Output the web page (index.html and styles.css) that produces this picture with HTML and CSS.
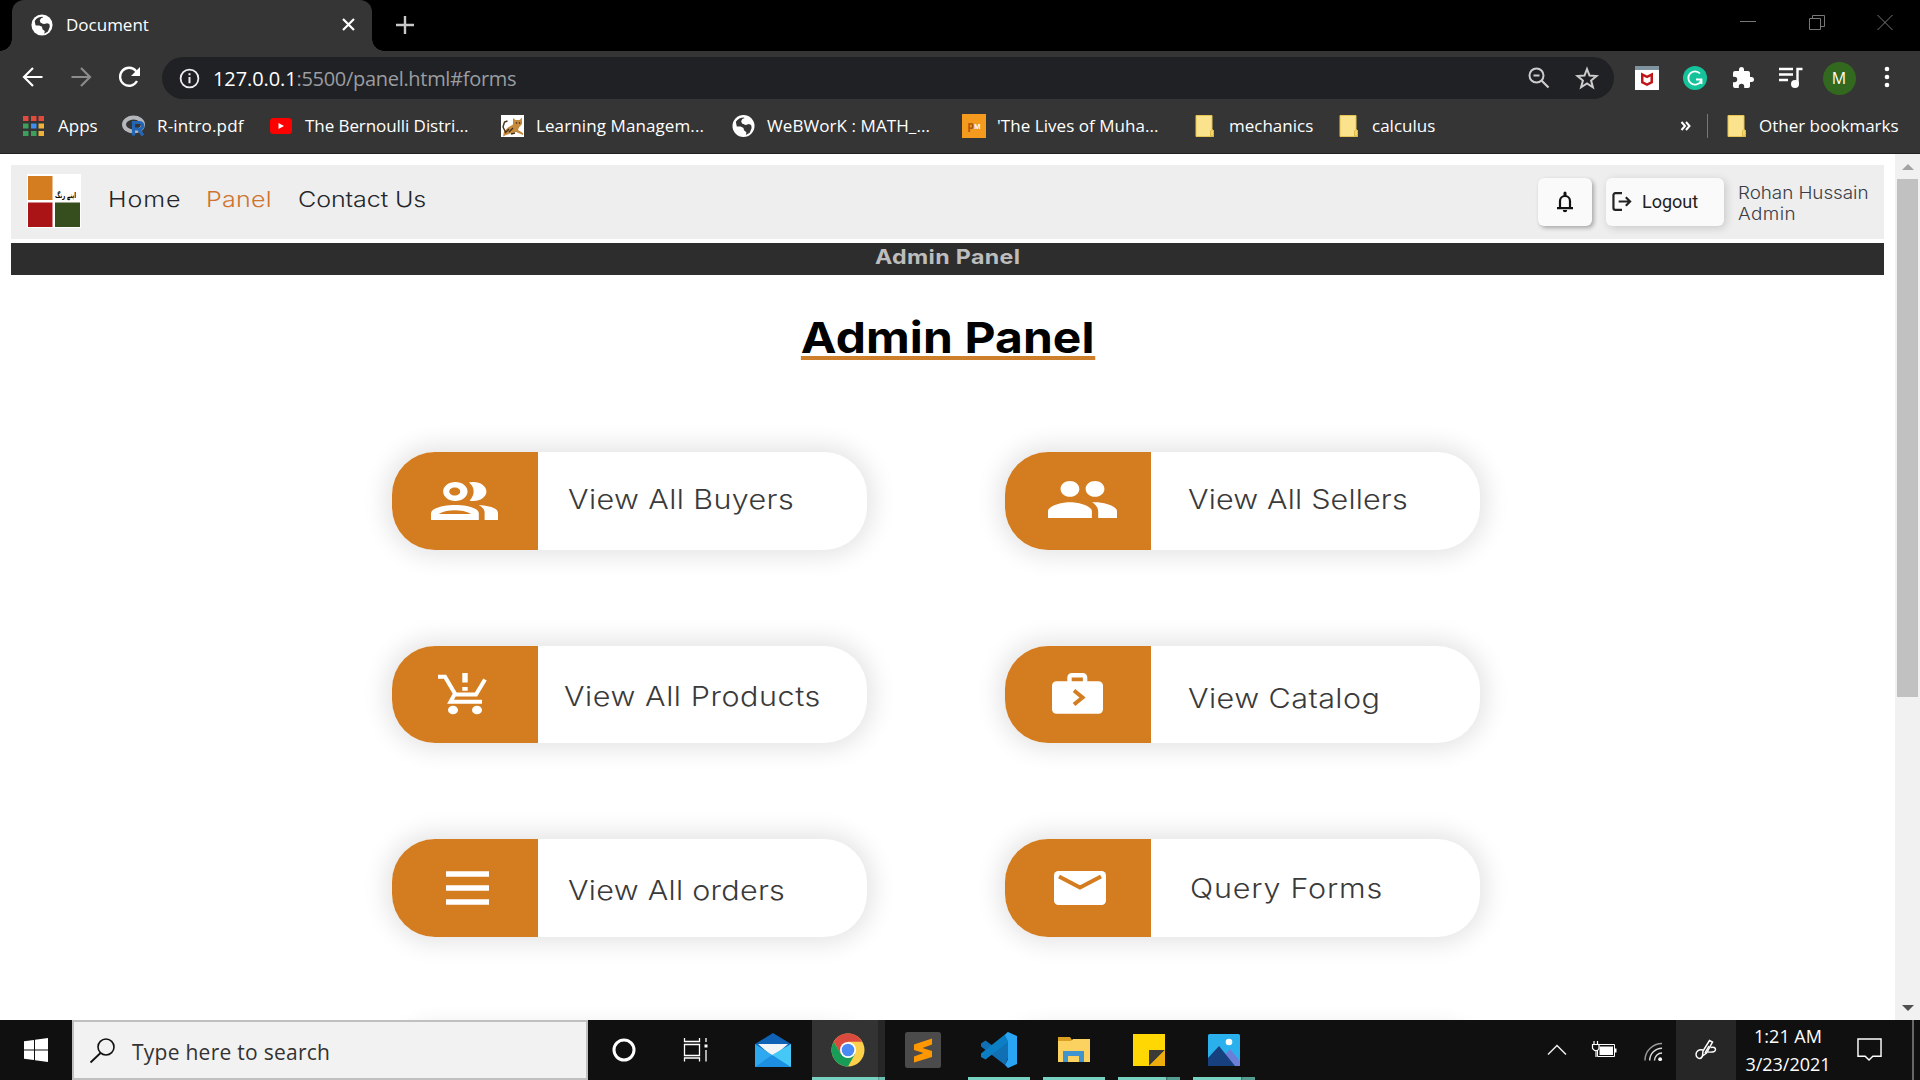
FILE: index.html
```html
<!DOCTYPE html>
<html lang="en">
<head>
<meta charset="utf-8">
<title>Document</title>
<link rel="stylesheet" href="styles.css">
</head>
<body>
<svg class="defs" aria-hidden="true">
  <symbol id="globe" viewBox="0 0 24 24">
    <circle cx="12" cy="12" r="11.5" fill="#fff"/>
    <path d="M4 7.5C6 4.500 9 3 12.500 3l1 2-3 2 .5 2.500 3.500 1.500 3-1 2.500 1 .5 3-2 5-4 2.500.5-3-2.500-2-.5-2.500-3-1.500L5 12.500z" fill="#353535"/>
    <path d="M11 4.500l5-1.500 4 4-3.500 1.500-3 2-3-1-1-2.500zM4.500 12.500l4 1.500 2 3 2.500 2-.5 2-4-1.500-3-3.500z" fill="#fff"/>
  </symbol>
  <symbol id="folder" viewBox="0 0 19 22">
    <path d="M1 .5h16v14l1.500 1v6H1z" fill="#fbe28c" stroke="#e5c452"/>
    <path d="M15.500 21v-5l1.500-1.500 1.500 1.500v5z" fill="#f7d566" stroke="#d8b13a" stroke-width=".8"/>
  </symbol>
</svg>

<header class="tabstrip">
  <div class="tab">
    <svg class="favicon"><use href="#globe"/></svg>
    <span class="tab-title">Document</span>
    <svg class="tab-close" viewBox="0 0 13 13"><path d="M1 1l11 11M12 1L1 12" stroke="#fff" stroke-width="2.200"/></svg>
  </div>
  <svg class="new-tab" viewBox="0 0 18 18"><path d="M9 0v18M0 9h18" stroke="#c8c8c8" stroke-width="2.400"/></svg>
  <div class="window-controls">
    <svg viewBox="0 0 16 16"><path d="M0 7.500h16" stroke="#777"/></svg>
    <svg viewBox="0 0 16 16"><path d="M.5 4.500h11v11H.5zM3.500 4V1.500h12v11H12" fill="none" stroke="#777"/></svg>
    <svg viewBox="0 0 16 16"><path d="M.5 1l15 15M15.500 1l-15 15" stroke="#777"/></svg>
  </div>
</header>

<nav class="toolbar">
  <div class="nav-buttons">
    <svg viewBox="0 0 24 24"><path d="M21.500 12H3.500M12 3l-9 9 9 9" fill="none" stroke="#fff" stroke-width="2.200"/></svg>
    <svg viewBox="0 0 24 24"><path d="M2.500 12h18M12 3l9 9-9 9" fill="none" stroke="#8b8b8b" stroke-width="2.200"/></svg>
    <svg viewBox="0 0 24 24"><path d="M20 16A9 9 0 1 1 19 6l2 2" fill="none" stroke="#fff" stroke-width="2.300"/><path d="M23 2v9h-9z" fill="#fff"/></svg>
  </div>
  <div class="omnibox">
    <svg class="info" viewBox="0 0 22 22"><circle cx="11" cy="11" r="9.300" fill="none" stroke="#eee" stroke-width="1.900"/><path d="M11 9.500v6.500M11 5.500v2.200" stroke="#eee" stroke-width="2.100"/></svg>
    <span class="url"><b>127.0.0.1</b>:5500/panel.html#forms</span>
    <svg class="action" viewBox="0 0 24 24"><circle cx="9.500" cy="9.500" r="7" fill="none" stroke="#ccc" stroke-width="2"/><path d="M6.500 9.500h6M14.500 14.500l7 7" stroke="#ccc" stroke-width="2.200"/></svg>
    <svg class="action" viewBox="0 0 24 24"><path d="M12 3l2.500 6.500 7 .5-5.400 4.500 1.800 6.800-5.900-3.800-5.900 3.800 1.800-6.800L2.500 10l7-.5z" fill="none" stroke="#ccc" stroke-width="2"/></svg>
  </div>
  <div class="extensions">
    <svg viewBox="0 0 24 24"><path d="M0 0h24v24H0z" fill="#fff"/><path d="M0 0h24v4H0z" fill="#7f949e"/><path d="M6 6.500l6 3 6-3v10.500l-6 3-6-3zM8.500 10.500v5l3.500 1.700 3.500-1.700v-5L12 12.300z" fill="#c01818" fill-rule="evenodd"/></svg>
    <svg viewBox="0 0 24 24"><circle cx="12" cy="12" r="12" fill="#15c39a"/><path d="M17 7.500A6.700 6.700 0 1 0 18 15M13 13.500h5.500V18" fill="none" stroke="#fff" stroke-width="1.800"/></svg>
    <svg viewBox="0 0 24 24"><path d="M20.500 11H19V7a2 2 0 0 0-2-2h-4V3.500a2.500 2.500 0 0 0-5 0V5H4a2 2 0 0 0-2 2v3.800h1.500a2.700 2.700 0 0 1 0 5.400H2V20a2 2 0 0 0 2 2h3.800v-1.500a2.700 2.700 0 0 1 5.400 0V22H17a2 2 0 0 0 2-2v-4h1.500a2.500 2.500 0 0 0 0-5z" fill="#fff"/></svg>
    <svg viewBox="0 0 24 24"><path d="M0 3h14M0 8.500h14M0 14h9" stroke="#fff" stroke-width="2.400"/><path d="M18.500 18V3h5" fill="none" stroke="#fff" stroke-width="2.400"/><circle cx="16" cy="18" r="4" fill="#fff"/></svg>
    <span class="avatar">M</span>
    <svg viewBox="0 0 24 24"><circle cx="12" cy="3" r="2.300" fill="#fff"/><circle cx="12" cy="11" r="2.300" fill="#fff"/><circle cx="12" cy="19" r="2.300" fill="#fff"/></svg>
  </div>
</nav>

<nav class="bookmarks">
  <a class="bm bm-apps"><svg viewBox="0 0 24 24"><path d="M0 2h5.500v5H0zM8 2h5.500v5H8zM15.500 2H21v5h-5.500z" fill="#e04b3e"/><path d="M0 9.500h5.500v5H0zM0 17h5.500v5H0zM8 17h5.500v5H8z" fill="#3e9f5d"/><path d="M8 9.500h5.500v5H8z" fill="#3d8ef0"/><path d="M15.500 9.500H21v5h-5.500zM15.500 17H21v5h-5.500z" fill="#efb13a"/></svg><span>Apps</span></a>
  <a class="bm bm-r"><svg viewBox="0 0 24 24"><ellipse cx="11.500" cy="10.500" rx="9.500" ry="7" fill="none" stroke="#b4b7bc" stroke-width="4"/><path d="M11.500 21.500V8.500h6a3.200 3.200 0 0 1 0 6.500h-6M16.500 15l4.500 6.500" fill="none" stroke="#2366b5" stroke-width="3.200"/></svg><span>R-intro.pdf</span></a>
  <a class="bm bm-yt"><svg viewBox="0 0 24 24"><rect y="4" width="22" height="16" rx="3.500" fill="#f00"/><path d="M8.500 9v6l5.500-3z" fill="#fff"/></svg><span>The Bernoulli Distri...</span></a>
  <a class="bm bm-lms"><svg viewBox="0 0 24 24"><path d="M0 1h23v22H0z" fill="#fff"/><path d="M12 4l2.500 2h4L21 3.500V10l-3 3.500-1 2.500 5 3v2l-7-3-4 1-6 2-3 1.500 1-5 4-4 5-3z" fill="#c58a3c"/><path d="M4.500 18L2 13l1.500-5 3-1M8 15l-4 4M12 14l-4 4M15 8.500l1 1m3-1l-1 1M10 20l4-1" fill="none" stroke="#443019" stroke-width="1.400"/></svg><span>Learning Managem...</span></a>
  <a class="bm bm-web"><svg><use href="#globe" width="23" height="24"/></svg><span>WeBWorK : MATH_...</span></a>
  <a class="bm bm-pm"><svg viewBox="0 0 24 24"><path d="M0 0h24v24H0z" fill="#f39a1f"/><text x="5.500" y="15" font-size="10" font-weight="700" font-family="Open Sans, sans-serif" fill="#a55405">p<tspan fill="#fff" font-size="7">M</tspan></text></svg><span>'The Lives of Muha...</span></a>
  <a class="bm bm-mech"><svg><use href="#folder" width="19" height="22" x="1" y="1"/></svg><span>mechanics</span></a>
  <a class="bm bm-calc"><svg><use href="#folder" width="19" height="22" x="1" y="1"/></svg><span>calculus</span></a>
  <svg class="overflow" viewBox="0 0 11 10"><path d="M1.500 1L5 5 1.500 9M6 1l3.500 4L6 9" fill="none" stroke="#fff" stroke-width="2"/></svg>
  <a class="bm bm-other"><svg><use href="#folder" width="19" height="22" y="1"/></svg><span>Other bookmarks</span></a>
</nav>

<main class="viewport">
  <div class="page">
    <div class="site-header">
      <svg class="logo" viewBox="0 0 54 54"><path d="M0 0h54v54H0z" fill="#fff"/><path d="M1 2h24.500v24H1z" fill="#d47d20"/><path d="M1 28.500h24.500V53H1z" fill="#ab1417"/><path d="M28 28.500h25V53H28z" fill="#364e1d"/><text x="38.500" y="24" text-anchor="middle" font-size="8" font-weight="700" font-family="DejaVu Sans, sans-serif" textLength="21" lengthAdjust="spacingAndGlyphs">اپنے رنگ</text></svg>
      <a class="link home">Home</a>
      <a class="link current">Panel</a>
      <a class="link contact">Contact Us</a>
      <button class="btn bell"><svg viewBox="0 0 16 20"><path d="M3 16V9a5 5 0 0 1 10 0v7" fill="none" stroke="#111" stroke-width="2.200"/><path d="M0 15h16v2.200H0zM6.500 1a1.500 1.500 0 0 1 3 0v3h-3zM5.800 18h4.400a2.200 2.200 0 0 1-4.400 0z" fill="#111"/></svg></button>
      <button class="btn logout"><svg viewBox="0 0 21 20"><path d="M10.500 1.200H3.500a2 2 0 0 0-2 2v13.600a2 2 0 0 0 2 2h7M7 10h12M14.500 5.500L19 10l-4.500 4.500" fill="none" stroke="#222" stroke-width="2.300"/></svg><span>Logout</span></button>
      <div class="user"><span class="name">Rohan Hussain</span><span class="role">Admin</span></div>
    </div>
    <div class="title-bar"><span>Admin Panel</span></div>
    <h1 class="heading"><span>Admin Panel</span></h1>
    <div class="cards">
      <a class="card buyers"><span class="tile"><svg width="67" height="38" viewBox="1 4 22 16" preserveAspectRatio="none" fill="#fff" fill-rule="evenodd"><path d="M16.670 13.800C18.040 14.660 18.600 15.620 18.600 17v3H23v-3c0-2.180-3.570-3.200-6.330-3.200zM15 12c2.210 0 4.200-1.790 4.200-4s-1.990-4-4.200-4c-.67 0-1.310.1-1.530.24C14.500 5.270 15 6.580 15 8s-.5 2.730-1.330 3.760c.42.14.86.24 1.330.24zM9 12c2.210 0 4-1.790 4-4s-1.790-4-4-4-4 1.790-4 4 1.790 4 4 4zm-.2-5.700c1.100 0 1.800.8 1.800 1.700s-.7 1.700-1.800 1.700-1.800-.8-1.800-1.700.7-1.700 1.800-1.700zM9 13.700c-2.670 0-8 .9-8 3.500V20h15.700v-2.800c0-2.600-5.030-3.500-7.700-3.500zM3.500 17.500C5 16.300 7 15.900 8.800 15.900s3.900.4 5.400 1.600z"/></svg></span><span class="label">View All Buyers</span></a>
      <a class="card sellers"><span class="tile"><svg width="69" height="37" viewBox="1 5 22 14" preserveAspectRatio="none" fill="#fff"><path d="M16 11c1.660 0 2.990-1.340 2.990-3S17.660 5 16 5c-1.660 0-3 1.340-3 3s1.340 3 3 3zm-8 0c1.660 0 2.990-1.340 2.990-3S9.660 5 8 5C6.340 5 5 6.340 5 8s1.340 3 3 3zm0 2c-2.330 0-7 1.170-7 3.500V19h14v-2.500c0-2.330-4.670-3.500-7-3.500zm8 0c-.29 0-.62.02-.97.05 1.160.84 1.970 1.970 1.970 3.450V19h6v-2.500c0-2.330-4.670-3.500-7-3.500z"/></svg></span><span class="label">View All Sellers</span></a>
      <a class="card products"><span class="tile"><svg width="49" height="42" viewBox="0 0 49 42"><path d="M0 3.800h7l10.500 17.700h20.500L47 6.500M16.500 21.500l-4 7.200H44" fill="none" stroke="#fff" stroke-width="4"/><path d="M24.300 0h5.400v9.500h-5.400zM24.300 14h5.400v3.800h-5.400z" fill="#fff"/><ellipse cx="15" cy="37" rx="5" ry="4.300" fill="#fff"/><ellipse cx="39" cy="37" rx="5" ry="4.300" fill="#fff"/></svg></span><span class="label">View All Products</span></a>
      <a class="card catalog"><span class="tile"><svg width="51" height="41" viewBox="0 0 51 41"><rect y="8.300" width="51" height="32.500" rx="4.500" fill="#fff"/><path d="M17.500 10V4.500a2.300 2.300 0 0 1 2.300-2.300h11a2.300 2.300 0 0 1 2.300 2.300V10" fill="none" stroke="#fff" stroke-width="4.400"/><path d="M22 17.500l8.500 7-8.500 7" fill="none" stroke="#d47d20" stroke-width="4"/></svg></span><span class="label">View Catalog</span></a>
      <a class="card orders"><span class="tile"><svg width="43" height="34" viewBox="0 0 43 34"><path d="M0 3h43M0 17h43M0 31h43" stroke="#fff" stroke-width="5.600"/></svg></span><span class="label">View All orders</span></a>
      <a class="card forms"><span class="tile"><svg width="52" height="34" viewBox="0 0 52 34"><rect width="52" height="34" rx="4.500" fill="#fff"/><path d="M5 5.500L26 16.500 47 5.500" fill="none" stroke="#d47d20" stroke-width="4"/></svg></span><span class="label">Query Forms</span></a>
      <a class="card"><span class="tile"></span></a>
      <a class="card"><span class="tile"></span></a>
    </div>
  </div>
  <div class="scrollbar">
    <svg viewBox="0 0 12 6"><path d="M0 6l6-6 6 6z" fill="#a3a3a3"/></svg>
    <div class="thumb"></div>
    <svg viewBox="0 0 12 6"><path d="M0 0l6 6 6-6z" fill="#505050"/></svg>
  </div>
</main>

<footer class="taskbar">
  <div class="start"><svg viewBox="0 0 24 24" fill="#fff"><path d="M0 3.300l10-1.400v9.600H0zM11 1.700L24 0v11.500H11zM0 12.500h10v9.600L0 20.700zM11 12.500h13V24l-13-1.800z"/></svg></div>
  <div class="search"><svg viewBox="0 0 25 25"><circle cx="16" cy="9" r="8" fill="none" stroke="#111" stroke-width="1.600"/><path d="M10.500 15L.5 24.500" stroke="#111" stroke-width="1.800"/></svg><span>Type here to search</span></div>
  <div class="app cortana"><svg viewBox="0 0 36 36"><circle cx="18" cy="18" r="10" fill="none" stroke="#fff" stroke-width="3"/></svg></div>
  <div class="app taskview"><svg viewBox="0 0 36 36" fill="none" stroke="#fff" stroke-width="1.300"><path d="M6.500 6v3.500h15V6M6.500 12.500h15v11h-15zM6.500 29.500V26h15v3.500M28 6v4M28 18v11.500"/><path d="M26.500 12.500h3v3h-3z" fill="#fff" stroke="none"/></svg></div>
  <div class="app mail"><svg viewBox="0 0 36 36"><path d="M0 12L18 1l18 11v10H0z" fill="#0f62b5"/><path d="M3 12h30L18 25z" fill="#f2f4f6"/><path d="M0 12l36 23H0z" fill="#2ea8ee"/><path d="M36 12v23h-2L17 23z" fill="#46c8f7"/><path d="M17 23l19 12H0z" fill="#1d8fe3"/></svg></div>
  <div class="app chrome stacked active running"><svg viewBox="0 0 36 36"><circle cx="18" cy="18" r="16.500" fill="#fdd04c"/><path d="M3.700 9.800A16.500 16.500 0 0 1 32.300 9.800H18L11 22z" fill="#db4a3f"/><path d="M3.700 9.800A16.500 16.500 0 0 0 18 34.500L25 22H11z" fill="#179d58"/><circle cx="18" cy="18" r="8" fill="#fff"/><circle cx="18" cy="18" r="6.300" fill="#4a8af4"/></svg></div>
  <div class="app sublime"><svg viewBox="0 0 36 36"><rect width="36" height="36" rx="2.500" fill="#4b4b4b"/><path d="M9 12.500L27 6.500v6L17.500 16l9.500 3v6L9 30.500v-6l9.500-3.500L9 18z" fill="#ff9800"/></svg></div>
  <div class="app vscode running"><svg viewBox="0 0 36 36"><path d="M27 0L12 14 4.500 8.500 0 11.500v3L24 33l3-7z" fill="#1070b3"/><path d="M27 10L4.500 27.500 0 25v-3.500L27 0z" fill="#0c7fc4"/><path d="M27 0l9 4v28l-9 4-3-3 3-6V9l-3-6z" fill="#2aa5f3"/></svg></div>
  <div class="app explorer running"><svg viewBox="0 0 36 36"><path d="M2 5h12l2 3v4H2z" fill="#dba021"/><path d="M2 9h13l2-2h17v23H2z" fill="#fbd160"/><path d="M7 30V19h21v11h-5v-6H12v6z" fill="#3f93cf"/></svg></div>
  <div class="app sticky stacked running"><svg viewBox="0 0 36 36"><path d="M2 2h32v17L23 34H2z" fill="#ffd804"/><path d="M18 18h16L18 34z" fill="#3b3a37"/><path d="M34 18v16H18z" fill="#eeaf0e"/></svg></div>
  <div class="app photos stacked running"><svg viewBox="0 0 36 36"><rect x="2" y="2" width="32" height="32" rx="1.500" fill="#2bb0ee"/><path d="M18 24l6-7 10 12v5H18z" fill="#6c7fd8"/><path d="M2 26l11-12 16 20H2z" fill="#16407e"/><circle cx="23" cy="10" r="3.300" fill="#fff"/></svg></div>
  <div class="tray">
    <svg class="chevron" viewBox="0 0 20 12"><path d="M1 10.500L10 1.500l9 9" fill="none" stroke="#eee" stroke-width="1.500"/></svg>
    <svg class="battery" viewBox="0 0 24 18"><path d="M5.500 3.500h17v12h-17z" fill="none" stroke="#fff"/><path d="M7.500 5.500h13.500v8.500H7.500zM23 7.500h1.500v4H23z" fill="#fff"/><path d="M.5 3.500h6.500v4L5.500 9.500h-3L.5 7.500zM2 0v3.500M5.500 0v3.500M4 9.500V16" fill="#111" stroke="#fff" stroke-width="1.200"/></svg>
    <svg class="wifi" viewBox="0 0 20 20" fill="none"><path d="M1 19A18 18 0 0 1 19 1" stroke="#999" stroke-width="1.500"/><path d="M6 19A13 13 0 0 1 19 6M11 19a8 8 0 0 1 8-8" stroke="#ddd" stroke-width="1.500"/><circle cx="17" cy="17.500" r="2" fill="#fff"/></svg>
    <div class="pen"><svg viewBox="0 0 22 22" fill="none" stroke="#fff" stroke-width="1.500"><path d="M7.500 17L8 12 14.500 1.500l3 1.500L11.500 14z"/><path d="M8 11c-4-1-7 1-7 4.500S5 21 7 18l.5-1M15.500 8.500c3-.5 5 0 5 2s-2 3-8 2.500M10 14l4-7"/></svg></div>
    <div class="clock"><span>1:21 AM</span><span>3/23/2021</span></div>
    <svg class="notif" viewBox="0 0 26 25"><path d="M1 1h24v18h-8.500L12.500 23l-4-4H1z" fill="none" stroke="#fff" stroke-width="1.500"/></svg>
    <div class="show-desktop"></div>
  </div>
</footer>
</body>
</html>
```
FILE: styles.css
```css
* { box-sizing: border-box; }

body {
  margin: 0;
  width: 1920px;
  height: 1080px;
  display: flex;
  flex-direction: column;
  overflow: hidden;
  background: #fff;
  font-family: "Open Sans", "Noto Sans", sans-serif;
  color: #fff;
}

svg { display: block; flex: none; overflow: visible; }
.defs { position: absolute; width: 0; height: 0; }

/* Browser tab strip */
.tabstrip {
  height: 51px;
  flex: none;
  display: flex;
  align-items: center;
  background: #000;
}
.tab {
  position: relative;
  width: 360px;
  height: 51px;
  margin-left: 12px;
  padding: 0 17px 2px 19px;
  display: flex;
  align-items: center;
  background: #353535;
  border-radius: 12px 12px 0 0;
}
.tab::before,
.tab::after {
  content: "";
  position: absolute;
  bottom: 0;
  width: 12px;
  height: 12px;
}
.tab::before { left: -12px; background: radial-gradient(circle at 0 0, transparent 11.5px, #353535 12px); }
.tab::after { right: -12px; background: radial-gradient(circle at 100% 0, transparent 11.5px, #353535 12px); }
.favicon { width: 22px; height: 22px; }
.tab-title { margin-left: 13px; font-size: 17px; }
.tab-close { width: 13px; height: 13px; margin-left: auto; }
.new-tab { width: 18px; height: 18px; margin: 0 0 2px 24px; }
.window-controls {
  display: flex;
  gap: 52.5px;
  margin: 0 27px 8px auto;
}
.window-controls svg { width: 16px; height: 16px; }

/* Address row */
.toolbar {
  height: 54px;
  flex: none;
  display: flex;
  align-items: center;
  background: #353535;
}
.nav-buttons { display: flex; gap: 24px; padding: 0 0 2px 21px; }
.nav-buttons svg { width: 24px; height: 24px; }
.omnibox {
  width: 1452px;
  height: 42px;
  margin-left: 21px;
  padding: 0 3px 0 17px;
  display: flex;
  align-items: center;
  border-radius: 21px;
  background: #202124;
}
.info { width: 21px; height: 21px; }
.url {
  margin: 0 auto 0 13px;
  font-size: 20px;
  letter-spacing: -.3px;
  color: #9a9da1;
}
.url b { font-weight: 400; letter-spacing: -.1px; color: #fff; }
.action { width: 24px; height: 24px; margin: 0 12px; }
.extensions { display: flex; align-items: center; margin-left: 9px; }
.extensions svg { width: 24px; height: 24px; margin: 0 12px; }
.avatar {
  width: 33px;
  height: 33px;
  margin: 0 7.5px;
  border-radius: 50%;
  background: #33691e;
  font-size: 16px;
  line-height: 33px;
  text-align: center;
}

/* Bookmarks row */
.bookmarks {
  height: 49px;
  flex: none;
  display: flex;
  align-items: center;
  padding: 0 0 6px 23px;
  background: #353535;
  border-bottom: 1px solid #222;
}
.bm {
  flex: none;
  display: flex;
  align-items: center;
  font-size: 17px;
  line-height: 24px;
  white-space: nowrap;
}
.bm svg { width: 24px; height: 24px; margin-right: 11px; }
.bm-apps { width: 99px; }
.bm-r { width: 148px; letter-spacing: .15px; }
.bm-yt { width: 231px; letter-spacing: -.07px; }
.bm-lms { width: 231px; letter-spacing: .1px; }
.bm-web { width: 230px; letter-spacing: .08px; }
.bm-pm { width: 232px; letter-spacing: .05px; }
.bm-mech { width: 144px; }
.bm-calc svg { margin-right: 10px; }
.overflow { width: 11px; height: 10px; margin-left: auto; }
.bm-other {
  width: 213px;
  margin-left: 16px;
  padding-left: 19px;
  border-left: 1px solid #777;
}
.bm-other svg { margin-right: 8px; }

/* Page viewport */
.viewport {
  height: 866px;
  flex: none;
  display: flex;
  overflow: hidden;
  background: #fff;
}
.page {
  width: 1895px;
  padding: 11px;
  font-family: Inter, "Open Sans", sans-serif;
}
.site-header {
  height: 74px;
  padding: 0 17px 0 16px;
  display: flex;
  align-items: center;
  background: #eee;
}
.logo { width: 54px; height: 54px; margin-bottom: 2px; }
.link {
  margin: 0 0 7px;
  font-size: 22px;
  font-weight: 300;
  line-height: 30px;
  white-space: nowrap;
  color: #24262b;
  transform: scaleX(1.14);
  transform-origin: left;
}
.home { width: 98px; margin-left: 27px; letter-spacing: .8px; }
.current { width: 92px; letter-spacing: .2px; color: #cf7430; }
.contact { width: 130px; letter-spacing: -.1px; }
.btn {
  height: 48px;
  padding: 0;
  display: flex;
  align-items: center;
  border: 0;
  border-radius: 6px;
  background: #fafafa;
  color: #222;
}
.bell {
  width: 54px;
  margin-left: auto;
  justify-content: center;
  box-shadow: 2px 2px 4px rgba(0, 0, 0, .3);
}
.bell svg { width: 16px; height: 20px; }
.logout {
  width: 118px;
  margin: 0 12px 0 14px;
  padding: 0 0 1px 6px;
  font: 18px Roboto, sans-serif;
  box-shadow: 2px 2px 9px rgba(0, 0, 0, .16);
}
.logout svg { width: 20px; height: 19px; margin-right: 10px; }
.user {
  width: 131px;
  padding: 4px 0 0 2px;
  display: flex;
  flex-direction: column;
  font-size: 17px;
  font-weight: 300;
  line-height: 21px;
  white-space: nowrap;
  color: #3a3d45;
}
.user span { transform: scaleX(1.11); transform-origin: left; }
.name { letter-spacing: -.05px; }
.role { letter-spacing: .4px; }
.title-bar {
  height: 32px;
  margin-top: 4px;
  background: #2d2d2d;
  color: #bdbdbd;
  font-size: 20px;
  font-weight: 700;
  line-height: 28px;
  letter-spacing: .3px;
  text-align: center;
}
.title-bar span { display: inline-block; transform: scaleX(1.16); }
.heading {
  height: 85px;
  margin: 0;
  padding-top: 39px;
  display: flex;
  justify-content: center;
  color: #000;
  font-size: 43px;
  font-weight: 650;
  line-height: 46px;
  letter-spacing: .1px;
}
.heading span {
  height: 46px;
  border-bottom: 4px solid #cd7f2b;
  transform: scaleX(1.115);
}

/* Action cards */
.cards {
  display: grid;
  grid-template-columns: 475.5px 475.5px;
  grid-auto-rows: 97.5px;
  gap: 96px 137.5px;
  padding: 92px 0 0 380.5px;
}
.card {
  display: flex;
  align-items: center;
  overflow: hidden;
  border-radius: 43px;
  background: #fff;
  box-shadow: 0 0 25px 6px rgba(0, 0, 0, .11);
}
.tile {
  width: 146.5px;
  height: 100%;
  flex: none;
  display: flex;
  align-items: center;
  background: #d47d20;
}
.label {
  color: #3a3a3a;
  font-size: 27px;
  line-height: 36px;
  white-space: nowrap;
  font-weight: 300;
  transform: scaleX(1.13);
  transform-origin: left;
}
.buyers .tile { padding-left: 39px; }
.buyers .label { margin: -2px 0 0 30px; letter-spacing: .35px; }
.sellers .tile { padding: 0 0 3px 43px; }
.sellers .label { margin: -2px 0 0 37px; letter-spacing: .15px; }
.products .tile { padding-left: 46.5px; }
.products .label { margin: 6px 0 0 26px; letter-spacing: .5px; }
.catalog .tile { padding: 0 0 2px 47px; }
.catalog .label { margin: 9px 0 0 37px; letter-spacing: .4px; }
.orders .tile { padding: 1px 0 0 54px; }
.orders .label { margin: 6px 0 0 30px; letter-spacing: .25px; }
.forms .tile { padding: 0 0 0 49.5px; }
.forms .label { margin: 2px 0 0 39px; letter-spacing: .7px; }

/* Page scrollbar */
.scrollbar {
  width: 25px;
  padding: 10px 2px 9px;
  display: flex;
  flex-direction: column;
  align-items: center;
  background: #f1f1f1;
}
.scrollbar svg { width: 12px; height: 6px; }
.thumb { width: 21px; height: 518px; margin: 9px 0 auto; background: #c1c1c1; }

/* Taskbar */
.taskbar {
  height: 60px;
  flex: none;
  display: flex;
  background: #101010;
}
.start { width: 72px; padding: 18px 24px; }
.start svg { width: 24px; height: 24px; }
.search {
  width: 516px;
  padding-left: 16px;
  display: flex;
  align-items: center;
  border: 2px solid #c0c0c0;
  background: #f2f2f2;
  color: #333;
  font-size: 21px;
  letter-spacing: .26px;
}
.search svg { width: 25px; height: 25px; margin-right: 17px; }
.search span { padding-top: 3px; }
.app {
  position: relative;
  width: 62px;
  margin-right: 13px;
  display: flex;
  align-items: center;
  justify-content: center;
}
.app svg { width: 36px; height: 36px; }
.cortana { width: 72px; margin: 0; }
.taskview { width: 72px; margin: 0; }
.mail { width: 74px; margin: 0 2px 0 4px; }
.chrome { width: 73px; margin: 0 7px 0 0; padding-right: 2px; background: linear-gradient(90deg, #333 66px, #262626 66px); }
.running::after {
  content: "";
  position: absolute;
  left: 0;
  right: 0;
  bottom: 0;
  height: 3px;
  background: #76d1c0;
}
.stacked::after { background: linear-gradient(90deg, #76d1c0 calc(100% - 14px), #3a6b62 calc(100% - 14px), #559d90 calc(100% - 12px)); }
.chrome::after { background: linear-gradient(90deg, #76d1c0 66px, #559d90 66px, #6cc0b0 68px); }
.sublime { margin-right: 14px; }

.tray {
  flex: 1;
  min-width: 0;
  display: flex;
  align-items: center;
  justify-content: flex-end;
}
.chevron { width: 20px; height: 12px; margin-right: 25px; }
.battery { width: 24px; height: 18px; margin-right: 28px; }
.wifi { width: 19px; height: 20px; margin: 3px 13px 0 0; }
.pen {
  width: 60px;
  height: 60px;
  display: flex;
  align-items: center;
  justify-content: center;
  background: #262626;
}
.pen svg { width: 22px; height: 22px; }
.clock {
  width: 103px;
  height: 60px;
  padding: 2px 0 0 1px;
  display: flex;
  flex-direction: column;
  text-align: center;
  font-size: 18px;
  line-height: 28px;
}
.notif { width: 25px; height: 24px; margin: 0 30px 0 18px; }
.show-desktop { width: 8px; height: 60px; border-left: 2px solid #666; }
```
